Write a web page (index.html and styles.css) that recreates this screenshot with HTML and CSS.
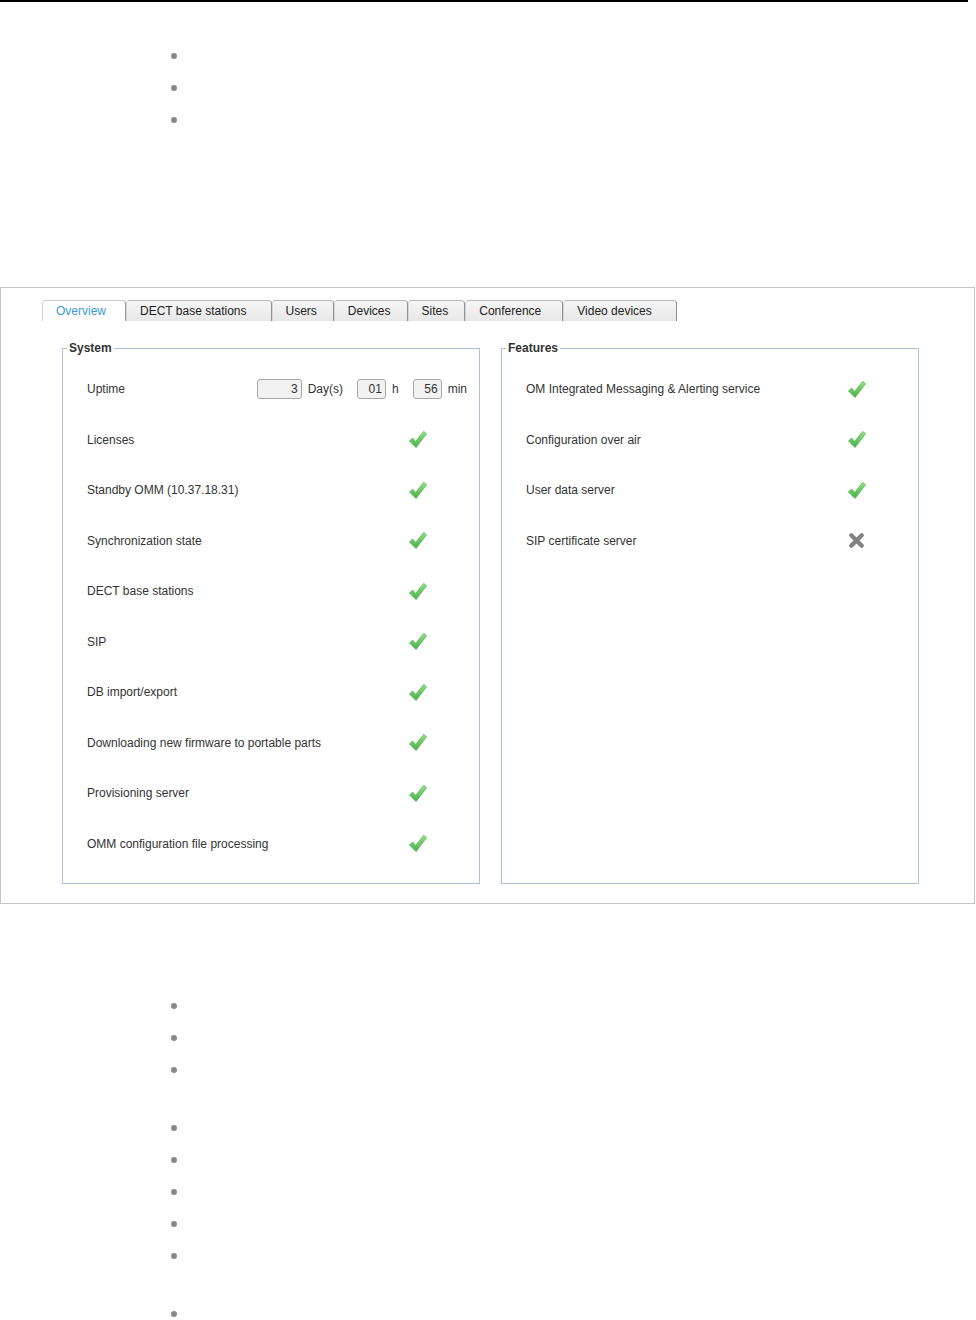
FILE: index.html
```html
<!DOCTYPE html>
<html lang="en">
<head>
    <meta charset="UTF-8">
    <title>OMM Status Overview</title>
    <link rel="stylesheet" href="styles.css">
</head>
<body>
    <div class="rule"></div>

    <ul class="bullets top">
        <li></li>
        <li></li>
        <li></li>
    </ul>

    <div class="shot">
        <div class="tabs">
            <div class="tab active">Overview</div>
            <div class="tab wide">DECT base stations</div>
            <div class="tab">Users</div>
            <div class="tab">Devices</div>
            <div class="tab narrow">Sites</div>
            <div class="tab conf">Conference</div>
            <div class="tab last">Video devices</div>
        </div>

        <div class="panels">
            <fieldset class="panel">
                <legend>System</legend>
                <div class="row uptime">
                    <span>Uptime</span>
                    <span class="timer">
                        <span class="field days">3</span><span class="unit">Day(s)</span>
                        <span class="field">01</span><span class="unit">h</span>
                        <span class="field">56</span><span class="unit">min</span>
                    </span>
                </div>
                <div class="row"><span>Licenses</span><svg class="ok"><use href="#check"/></svg></div>
                <div class="row"><span>Standby OMM (10.37.18.31)</span><svg class="ok"><use href="#check"/></svg></div>
                <div class="row"><span>Synchronization state</span><svg class="ok"><use href="#check"/></svg></div>
                <div class="row"><span>DECT base stations</span><svg class="ok"><use href="#check"/></svg></div>
                <div class="row"><span>SIP</span><svg class="ok"><use href="#check"/></svg></div>
                <div class="row"><span>DB import/export</span><svg class="ok"><use href="#check"/></svg></div>
                <div class="row"><span>Downloading new firmware to portable parts</span><svg class="ok"><use href="#check"/></svg></div>
                <div class="row"><span>Provisioning server</span><svg class="ok"><use href="#check"/></svg></div>
                <div class="row"><span>OMM configuration file processing</span><svg class="ok"><use href="#check"/></svg></div>
            </fieldset>

            <fieldset class="panel">
                <legend>Features</legend>
                <div class="row"><span>OM Integrated Messaging &amp; Alerting service</span><svg class="ok"><use href="#check"/></svg></div>
                <div class="row"><span>Configuration over air</span><svg class="ok"><use href="#check"/></svg></div>
                <div class="row"><span>User data server</span><svg class="ok"><use href="#check"/></svg></div>
                <div class="row"><span>SIP certificate server</span><svg class="ok"><use href="#cross"/></svg></div>
            </fieldset>
        </div>
    </div>

    <ul class="bullets after-shot">
        <li></li>
        <li></li>
        <li></li>
    </ul>
    <ul class="bullets">
        <li></li>
        <li></li>
        <li></li>
        <li></li>
        <li></li>
    </ul>
    <ul class="bullets">
        <li></li>
    </ul>

    <!-- shared icons -->
    <svg width="0" height="0" style="position:absolute">
        <defs>
            <linearGradient id="green" x1="0" y1="0" x2="0" y2="1">
                <stop offset="0" stop-color="#94e285"/>
                <stop offset="1" stop-color="#46ad46"/>
            </linearGradient>
            <symbol id="check" viewBox="0 0 22 22">
                <path d="M2.5 12.5 L6 9.5 L9 13 L17.5 2.5 L20.5 5 L9.5 19.5 Z" fill="url(#green)" stroke="#5bb556" stroke-width="0.8" stroke-linejoin="round"/>
            </symbol>
            <symbol id="cross" viewBox="0 0 22 22">
                <path d="M5.5 5.5 L16.5 16.5 M16.5 5.5 L5.5 16.5" stroke="#828282" stroke-width="4.5" stroke-linecap="round"/>
            </symbol>
        </defs>
    </svg>
</body>
</html>
```

FILE: styles.css
```css
body { margin: 0; font-family: "Liberation Sans", Arial, sans-serif; color: #333; background: #fff; }

.rule { width: 968px; height: 2px; background: #000; }

.bullets { list-style: none; margin: 26px 0 0; padding: 0 0 0 171px; }
.bullets.top { margin-top: 38px; }
.bullets.after-shot { margin-top: 86px; }
.bullets li { height: 32px; display: flex; align-items: center; }
.bullets li::before { content: ""; width: 6px; height: 6px; border-radius: 50%; background: #8a8a8a; }

.shot {
    margin-top: 151px; width: 975px; height: 617px; box-sizing: border-box;
    border: 1px solid #c4c4c4; padding: 12px 0 0 41px;
}

.tabs { display: flex; height: 21px; }
.tab {
    font-size: 12px; line-height: 20px; padding: 0 16px 0 13px; color: #222;
    background: linear-gradient(#f6f6f6, #e7e7e7);
    border-top: 1px solid #b8b8b8; border-left: 1px solid #d6d6d6; border-right: 1px solid #8f8f8f;
    border-radius: 4px 4px 0 0;
}
.tab.wide { padding-right: 24px; }
.tab.narrow { padding: 0 16px 0 13px; }
.tab.conf { padding-right: 21px; }
.tab.last { padding-right: 24px; }
.tab.active { background: #fff; color: #3a9ad6; padding-right: 19px; border-color: #c8c8c8 #9a9a9a #c8c8c8 #d0d0d0; }

.panels { display: flex; gap: 21px; margin: 20px 0 0 20px; }
.panel {
    width: 418px; height: 543px; box-sizing: border-box; margin: 0;
    border: 1px solid #a9c4dc; padding: 9px 51px 0 24px;
}
.panel legend { font-size: 12px; font-weight: bold; padding: 0 2px; margin-left: -20px; color: #333; }

.row { height: 50.5px; display: flex; align-items: center; justify-content: space-between; font-size: 12px; }
.row .ok { width: 21px; height: 21px; }
.row.uptime { margin-right: -39px; }

.timer { display: flex; align-items: center; }
.field {
    width: 29px; height: 20px; box-sizing: border-box; border: 1px solid #a6a6a6; border-radius: 3px;
    background: #f2f2f2; text-align: right; padding-right: 3px; line-height: 18px; font-size: 12px;
}
.field.days { width: 45px; }
.unit { margin: 0 14px 0 6px; }
.unit:last-child { margin-right: 0; }
```
